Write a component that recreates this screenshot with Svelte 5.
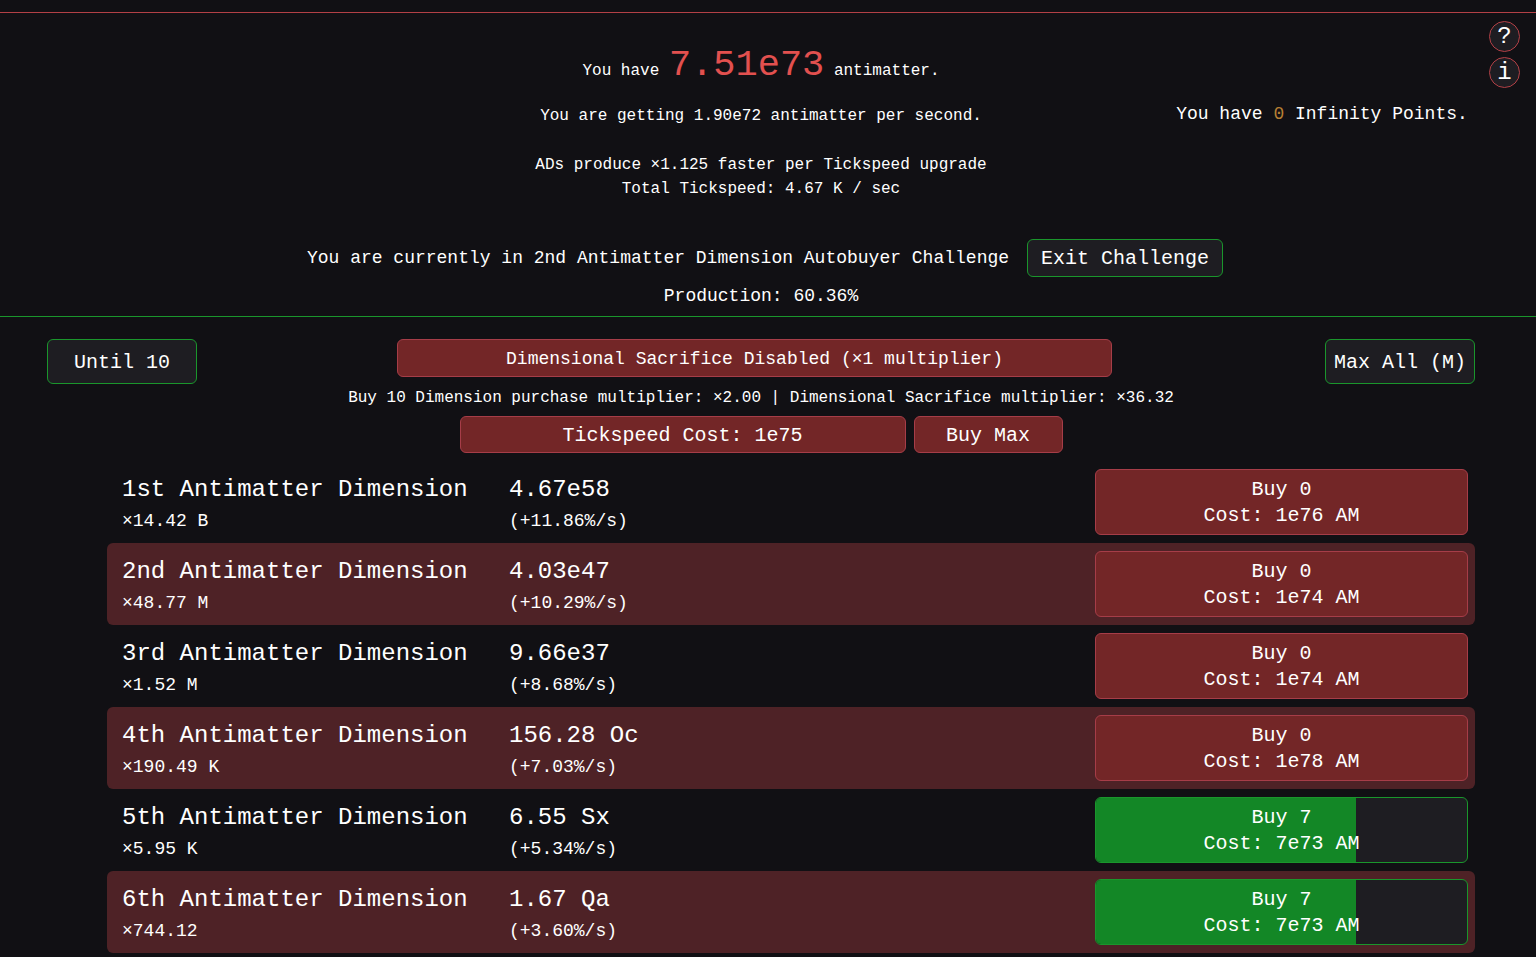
<script lang="ts">
	type Dimension = {
		name: string;
		multiplier: string;
		amount: string;
		rate: string;
		buy: number;
		cost: string;
		progress: number;
	};

	let dimensions = $state<Dimension[]>([
		{ name: '1st', multiplier: '14.42 B', amount: '4.67e58', rate: '+11.86', buy: 0, cost: '1e76', progress: 0 },
		{ name: '2nd', multiplier: '48.77 M', amount: '4.03e47', rate: '+10.29', buy: 0, cost: '1e74', progress: 0 },
		{ name: '3rd', multiplier: '1.52 M', amount: '9.66e37', rate: '+8.68', buy: 0, cost: '1e74', progress: 0 },
		{ name: '4th', multiplier: '190.49 K', amount: '156.28 Oc', rate: '+7.03', buy: 0, cost: '1e78', progress: 0 },
		{ name: '5th', multiplier: '5.95 K', amount: '6.55 Sx', rate: '+5.34', buy: 7, cost: '7e73', progress: 70 },
		{ name: '6th', multiplier: '744.12', amount: '1.67 Qa', rate: '+3.60', buy: 7, cost: '7e73', progress: 70 }
	]);

	let untilTen = $state(true);
</script>

<div class="game">
	<header class="header">
		<div class="resources">
			<div class="production">
				<p class="antimatter">You have <span class="antimatter-amount">7.51e73</span> antimatter.</p>
				<p class="per-second">You are getting 1.90e72 antimatter per second.</p>
				<p class="tickspeed">ADs produce ×1.125 faster per Tickspeed upgrade</p>
				<p>Total Tickspeed: 4.67 K / sec</p>
			</div>
			<p class="infinity">You have <span class="infinity-amount">0</span> Infinity Points.</p>
		</div>
		<div class="challenge">
			<span>You are currently in 2nd Antimatter Dimension Autobuyer Challenge</span>
			<button class="btn btn-exit">Exit Challenge</button>
		</div>
		<p class="challenge-production">Production: 60.36%</p>
		<div class="help">
			<button class="help-btn" aria-label="How to play">?</button>
			<button class="help-btn" aria-label="Information">i</button>
		</div>
	</header>

	<main class="tab">
		<div class="controls">
			<button class="btn btn-side" onclick={() => (untilTen = !untilTen)}>
				{untilTen ? 'Until 10' : 'Buy 1'}
			</button>
			<div class="controls-center">
				<button class="btn locked btn-sacrifice">Dimensional Sacrifice Disabled (×1 multiplier)</button>
				<p class="multipliers">
					Buy 10 Dimension purchase multiplier: ×2.00 | Dimensional Sacrifice multiplier: ×36.32
				</p>
				<div class="tickspeed-row">
					<button class="btn locked btn-tickspeed">Tickspeed Cost: 1e75</button>
					<button class="btn locked btn-max">Buy Max</button>
				</div>
			</div>
			<button class="btn btn-side">Max All (M)</button>
		</div>

		<ul class="dimensions">
			{#each dimensions as dim (dim.name)}
				<li class="dimension">
					<div class="info">
						<div class="large">{dim.name} Antimatter Dimension</div>
						<div class="small">×{dim.multiplier}</div>
					</div>
					<div class="info">
						<div class="large">{dim.amount}</div>
						<div class="small">({dim.rate}%/s)</div>
					</div>
					<button class="btn btn-buy" class:locked={dim.buy === 0}>
						<span class="fill" style="width: {dim.progress}%"></span>
						<span class="label">Buy {dim.buy}<br />Cost: {dim.cost} AM</span>
					</button>
				</li>
			{/each}
		</ul>
	</main>
</div>

<style>
	:global(body) {
		margin: 0;
		background: #111014;
	}

	.game {
		padding-top: 12px;
		color: #ffffff;
		font-family: 'Liberation Mono', 'Courier New', monospace;
		font-size: 16px;
		line-height: 24px;
	}

	p {
		margin: 0;
	}

	.header {
		position: relative;
		padding: 28px 14px 8px 0;
		border-top: 1px solid #b34046;
		border-bottom: 1px solid #1a962c;
		text-align: center;
	}

	.resources {
		display: grid;
		grid-template-columns: 400fr 722fr 400fr;
	}

	.production {
		grid-column: 2;
	}

	.antimatter {
		line-height: 48px;
	}

	.antimatter-amount {
		color: #e2504f;
		font-size: 37px;
	}

	.per-second {
		margin-top: 9px;
	}

	.tickspeed {
		margin-top: 25px;
	}

	.infinity {
		margin-top: 61px;
		font-size: 18px;
	}

	.infinity-amount {
		color: #b67f33;
	}

	.challenge {
		display: flex;
		justify-content: center;
		align-items: center;
		gap: 18px;
		margin-top: 38px;
		padding-left: 8px;
		font-size: 18px;
	}

	.challenge-production {
		margin-top: 7px;
		font-size: 18px;
	}

	.help {
		position: absolute;
		top: 8px;
		right: 16px;
		display: flex;
		flex-direction: column;
		gap: 5px;
	}

	.help-btn {
		width: 31px;
		height: 31px;
		padding: 0;
		border: 1px solid #b34046;
		border-radius: 50%;
		background: #1e1d22;
		color: #ffffff;
		font-family: inherit;
		font-size: 24px;
		line-height: 28px;
		cursor: pointer;
	}

	.tab {
		padding: 22px 61px 0 47px;
	}

	.controls {
		display: grid;
		grid-template-columns: 150px 1fr 150px;
		align-items: start;
	}

	.controls-center {
		display: flex;
		flex-direction: column;
		align-items: center;
	}

	.btn {
		box-sizing: border-box;
		padding: 2px 0 0;
		border: 1px solid #1a962c;
		border-radius: 6px;
		background: #1e1d22;
		color: #ffffff;
		font-family: inherit;
		font-size: 20px;
		line-height: 26px;
		cursor: pointer;
	}

	.locked {
		border-color: #a63d48;
		background: #732627;
		cursor: default;
	}

	.btn-exit {
		height: 38px;
		padding: 2px 13px 0;
	}

	.btn-side {
		height: 45px;
	}

	.btn-sacrifice {
		width: 715px;
		height: 38px;
		margin-right: 13px;
		font-size: 18px;
	}

	.multipliers {
		margin: 9px 0 6px;
	}

	.tickspeed-row {
		display: flex;
		gap: 8px;
	}

	.btn-tickspeed {
		width: 446px;
		height: 37px;
	}

	.btn-max {
		width: 149px;
		height: 37px;
	}

	.dimensions {
		margin: 8px 0 0 60px;
		padding: 0;
		list-style: none;
	}

	.dimension {
		display: grid;
		grid-template-columns: 387fr 586fr 373fr;
		align-items: center;
		padding: 8px 7px 8px 15px;
		border-radius: 6px;
	}

	.dimension:nth-child(even) {
		background: #4e2226;
	}

	.info {
		padding-top: 4px;
	}

	.large {
		font-size: 24px;
		line-height: 34px;
	}

	.small {
		font-size: 18px;
		line-height: 28px;
	}

	.btn-buy {
		position: relative;
		height: 66px;
		overflow: hidden;
	}

	.fill {
		position: absolute;
		top: 0;
		bottom: 0;
		left: 0;
		background: #138726;
	}

	.label {
		position: relative;
	}
</style>
